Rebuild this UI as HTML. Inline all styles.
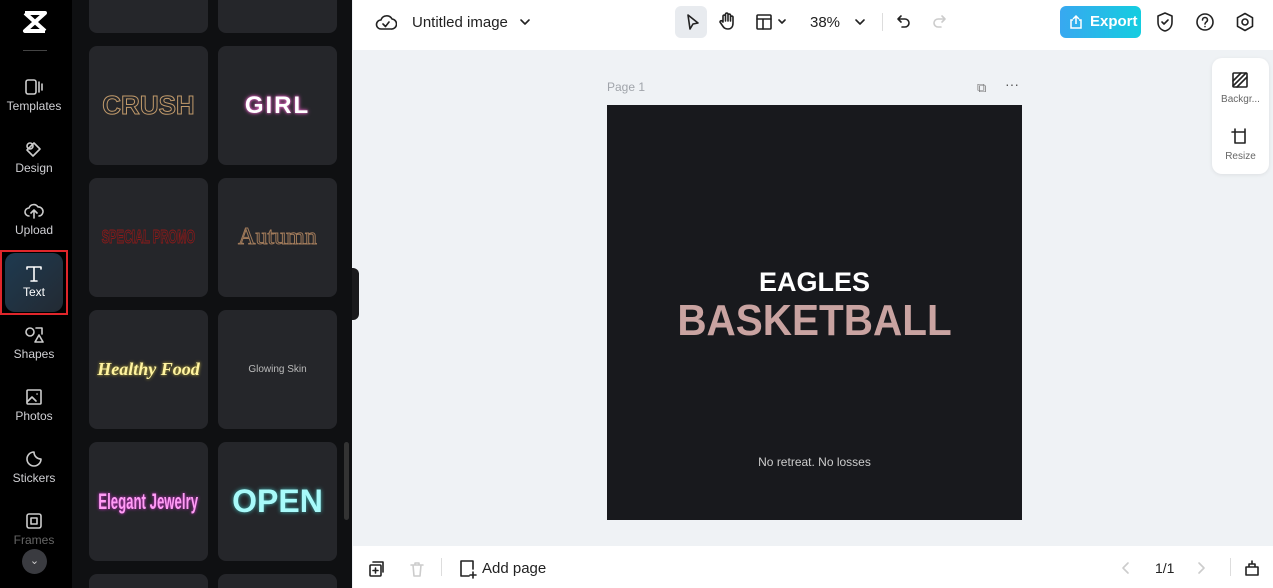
<!DOCTYPE html>
<html><head><meta charset="utf-8"><style>
*{box-sizing:border-box;margin:0;padding:0}
html{width:1273px;height:588px;overflow:hidden}
body{width:1273px;height:588px;overflow:hidden;font-family:"Liberation Sans",sans-serif;background:#eff2f5;position:relative}
.abs{position:absolute}
#side{left:0;top:0;width:72px;height:588px;background:#000}
.nav{position:absolute;left:0;width:68px;text-align:center;color:#d0d0d4;font-size:12px}
.nav svg{display:block;margin:0 auto 3px}
#panel{left:72px;top:0;width:280px;height:588px;background:#0f1012;overflow:hidden}
.card{position:absolute;width:119px;height:119px;background:#25262a;border-radius:8px;display:flex;align-items:center;justify-content:center;overflow:hidden;white-space:nowrap}
.card span{display:inline-block}
#top{left:353px;top:0;width:920px;height:50px;background:#fff}
#bot{left:353px;top:546px;width:920px;height:42px;background:#fff}
.ic{stroke:#222;fill:none;stroke-width:1.6;stroke-linecap:round;stroke-linejoin:round}
</style></head><body>
<div id="side" class="abs">
 <svg class="abs" style="left:22px;top:10px" width="26" height="24" viewBox="0 0 26 24"><path d="M3 3h20L3 21h20M3 3l20 18" stroke="#fff" stroke-width="4" fill="none" stroke-linejoin="round"/></svg>
 <div class="abs" style="left:23px;top:50px;width:24px;height:1px;background:#444"></div>
 <div class="nav" style="top:78px"><svg width="20" height="18" viewBox="0 0 20 18" class="ic" style="stroke:#ccc"><rect x="2" y="2" width="10" height="14" rx="2"/><path d="M15 4v10M18 6v6"/></svg>Templates</div>
 <div class="nav" style="top:140px"><svg width="20" height="18" viewBox="0 0 20 18" class="ic" style="stroke:#ccc"><circle cx="6" cy="6" r="3"/><path d="M10 3l6 6-7 7-6-6z"/></svg>Design</div>
 <div class="nav" style="top:202px"><svg width="20" height="18" viewBox="0 0 20 18" class="ic" style="stroke:#ccc"><path d="M5 14a4 4 0 010-8 5 5 0 019-1 4 4 0 011 9M10 16V9M7 11l3-3 3 3"/></svg>Upload</div>
 <div class="abs" style="left:0;top:250px;width:68px;height:65px;border:2px solid #e0262b"></div>
 <div class="abs" style="left:5px;top:253px;width:58px;height:59px;border-radius:10px;background:linear-gradient(135deg,#1e3a50,#232a33)"></div>
 <div class="nav" style="top:264px;color:#fff"><svg width="20" height="18" viewBox="0 0 20 18" class="ic" style="stroke:#fff"><path d="M3 3h14M10 3v14M3 3v2M17 3v2M7 17h6"/></svg>Text</div>
 <div class="nav" style="top:326px"><svg width="20" height="18" viewBox="0 0 20 18" class="ic" style="stroke:#ccc"><circle cx="6" cy="6" r="4"/><path d="M12 2h6v6M11 16l4-7 4 7z"/></svg>Shapes</div>
 <div class="nav" style="top:388px"><svg width="20" height="18" viewBox="0 0 20 18" class="ic" style="stroke:#ccc"><rect x="3" y="2" width="14" height="14" rx="1"/><path d="M3 14l5-5 4 4M13 6h.1"/></svg>Photos</div>
 <div class="nav" style="top:450px"><svg width="20" height="18" viewBox="0 0 20 18" class="ic" style="stroke:#ccc"><path d="M10 2a7 7 0 107 7c-4 0-7-3-7-7z"/></svg>Stickers</div>
 <div class="nav" style="top:512px;color:#666"><svg width="20" height="18" viewBox="0 0 20 18" class="ic" style="stroke:#ccc"><rect x="3" y="2" width="14" height="14" rx="2"/><rect x="7" y="6" width="6" height="6"/></svg>Frames</div>
 <div class="abs" style="left:22px;top:549px;width:25px;height:25px;border-radius:50%;background:#3a3b40;color:#ccc;font-size:11px;text-align:center;line-height:24px">⌄</div>
</div>
<div id="panel" class="abs">
 <div class="card" style="left:17px;top:-86px"></div><div class="card" style="left:146px;top:-86px"></div>
 <div class="card" style="left:17px;top:46px;font:bold 26px 'Liberation Sans';color:#25262a;-webkit-text-stroke:1px #c19a6b">CRUSH</div>
 <div class="card" style="left:146px;top:46px;font:bold 24px 'Liberation Sans';color:#fff;text-shadow:0 0 4px #e060c0,0 0 2px #e060c0;letter-spacing:2px">GIRL</div>
 <div class="card" style="left:17px;top:178px"><span style="font:bold 18px 'Liberation Sans';color:#25262a;-webkit-text-stroke:1px #8a1a1a;transform:scaleX(.62)">SPECIAL PROMO</span></div>
 <div class="card" style="left:146px;top:178px;font:24px 'Liberation Serif';color:#25262a;-webkit-text-stroke:1px #a07a5a">Autumn</div>
 <div class="card" style="left:17px;top:310px;font:italic bold 18px 'Liberation Serif';color:#fff4a0;text-shadow:0 0 3px #c9b640">Healthy Food</div>
 <div class="card" style="left:146px;top:310px;font:10px 'Liberation Sans';color:#bbb">Glowing Skin</div>
 <div class="card" style="left:17px;top:442px"><span style="font:bold 22px 'Liberation Sans';color:#ff9cf5;text-shadow:0 0 4px #d030d0;transform:scaleX(.6)">Elegant Jewelry</span></div>
 <div class="card" style="left:146px;top:442px;font:bold 32px 'Liberation Sans';color:#a8fafa;text-shadow:0 0 4px #40b0b0">OPEN</div>
 <div class="card" style="left:17px;top:574px"></div><div class="card" style="left:146px;top:574px"></div>
 <div class="abs" style="left:272px;top:442px;width:5px;height:78px;border-radius:3px;background:#333"></div>
</div>
<div class="abs" style="left:352px;top:268px;width:7px;height:52px;border-radius:0 6px 6px 0;background:#1a1a1c"></div>
<div id="top" class="abs">
 <svg class="abs" style="left:22px;top:13px" width="22" height="20" viewBox="0 0 22 20"><path class="ic" d="M6 16a4.5 4.5 0 010-9 6 6 0 0111-1 4.5 4.5 0 01-1 10zM8 11l2.5 2.5L14 9"/></svg>
 <div class="abs" style="left:59px;top:14px;font-size:15px;color:#222">Untitled image</div>
 <svg class="abs" style="left:165px;top:15px" width="14" height="14" viewBox="0 0 14 14"><path class="ic" d="M3 5l4 4 4-4"/></svg>
 <div class="abs" style="left:322px;top:6px;width:32px;height:32px;border-radius:6px;background:#e8ebef"></div>
 <svg class="abs" style="left:329px;top:12px" width="20" height="20" viewBox="0 0 20 20"><path class="ic" d="M6 3l10 8-5 1-3 5z"/></svg>
 <svg class="abs" style="left:364px;top:11px" width="20" height="20" viewBox="0 0 20 20"><path class="ic" d="M6 11V5a1.3 1.3 0 012.5 0v5V3a1.3 1.3 0 012.5 0v7V4a1.3 1.3 0 012.5 0v6V6a1.3 1.3 0 012.5 0v6c0 4-2 6-5 6s-4-1-6-4l-2-3a1.2 1.2 0 012-1z"/></svg>
 <svg class="abs" style="left:402px;top:12px" width="36" height="20" viewBox="0 0 36 20"><rect class="ic" x="2" y="3" width="14" height="14" rx="1"/><path class="ic" d="M2 7h14M8 7v10M24 8l3 3 3-3"/></svg>
 <div class="abs" style="left:457px;top:14px;font-size:15px;color:#222">38%</div>
 <svg class="abs" style="left:500px;top:15px" width="14" height="14" viewBox="0 0 14 14"><path class="ic" d="M3 5l4 4 4-4"/></svg>
 <div class="abs" style="left:529px;top:13px;width:1px;height:18px;background:#ddd"></div>
 <svg class="abs" style="left:541px;top:12px" width="20" height="20" viewBox="0 0 20 20"><path class="ic" d="M7 4L4 7l3 3M4 7h7a4 4 0 010 8H8"/></svg>
 <svg class="abs" style="left:576px;top:12px" width="20" height="20" viewBox="0 0 20 20"><path class="ic" style="stroke:#ccc" d="M13 4l3 3-3 3M16 7H9a4 4 0 000 8h3"/></svg>
 <div class="abs" style="left:707px;top:6px;width:81px;height:32px;border-radius:6px;background:linear-gradient(90deg,#38a8f0,#14cde0);color:#fff;font-size:15px;font-weight:bold;line-height:32px;padding-left:30px">Export</div>
 <svg class="abs" style="left:716px;top:14px" width="14" height="16" viewBox="0 0 14 16"><path d="M4 6H2v8h10V6h-2M7 10V2M4 5l3-3 3 3" stroke="#fff" stroke-width="1.5" fill="none"/></svg>
 <svg class="abs" style="left:802px;top:11px" width="20" height="22" viewBox="0 0 20 22"><path class="ic" d="M10 2l7 3v6c0 5-3 8-7 9-4-1-7-4-7-9V5zM7 11l2 2 4-4"/></svg>
 <svg class="abs" style="left:842px;top:12px" width="20" height="20" viewBox="0 0 20 20"><circle class="ic" cx="10" cy="10" r="8"/><path class="ic" d="M7.5 8a2.5 2.5 0 115 0c0 2-2.5 2-2.5 4M10 14.5v.1"/></svg>
 <svg class="abs" style="left:882px;top:12px" width="20" height="20" viewBox="0 0 20 20"><path class="ic" d="M10 1.5l7.5 4.2v8.6L10 18.5l-7.5-4.2V5.7z"/><circle class="ic" cx="10" cy="10" r="3"/></svg>
</div>
<div class="abs" style="left:607px;top:80px;font-size:12px;color:#a0a4aa">Page 1</div>
<div class="abs" style="left:977px;top:80px;font-size:13px;color:#777">⧉</div>
<div class="abs" style="left:1005px;top:76px;font-size:14px;color:#555">···</div>
<div class="abs" style="left:607px;top:105px;width:415px;height:415px;background:#18191d"></div>
<div class="abs" style="left:607px;top:267px;width:415px;text-align:center;font:bold 27px 'Liberation Sans';color:#fff">EAGLES</div>
<div class="abs" style="left:607px;top:296px;width:415px;text-align:center;font:bold 44px 'Liberation Sans';color:#c9a3a1;transform:scaleX(.92)">BASKETBALL</div>
<div class="abs" style="left:607px;top:455px;width:415px;text-align:center;font-size:12px;color:#ccc">No retreat. No losses</div>
<div class="abs" style="left:1212px;top:58px;width:57px;height:116px;background:#fff;border-radius:10px;box-shadow:0 1px 4px rgba(0,0,0,.08)"></div>
<svg class="abs" style="left:1231px;top:71px" width="18" height="18" viewBox="0 0 18 18"><rect class="ic" x="2" y="2" width="14" height="14" rx="1"/><path class="ic" d="M2 10l8-8M6 16l10-10M2 15L15 2"/></svg>
<div class="abs" style="left:1212px;top:94px;width:57px;text-align:center;font-size:10px;color:#666">Backgr...</div>
<svg class="abs" style="left:1231px;top:128px" width="18" height="18" viewBox="0 0 18 18"><path class="ic" d="M4 4h10v11H4zM4 1v3M14 1v3M1 4h3"/></svg>
<div class="abs" style="left:1212px;top:151px;width:57px;text-align:center;font-size:10px;color:#666">Resize</div>
<div id="bot" class="abs">
 <svg class="abs" style="left:15px;top:14px" width="18" height="18" viewBox="0 0 18 18"><rect class="ic" x="2" y="5" width="11" height="11" rx="1"/><path class="ic" d="M5 2h10v10M7.5 8v5M5 10.5h5"/></svg>
 <svg class="abs" style="left:55px;top:14px" width="18" height="18" viewBox="0 0 18 18"><path class="ic" style="stroke:#ccc" d="M3 5h12M5 5l1 11h6l1-11M7 5V3h4v2"/></svg>
 <div class="abs" style="left:88px;top:12px;width:1px;height:18px;background:#ddd"></div>
 <svg class="abs" style="left:105px;top:13px" width="20" height="20" viewBox="0 0 20 20"><path class="ic" d="M11 17H3V2h12v8M15 13v6M12 16h6"/></svg>
 <div class="abs" style="left:129px;top:14px;font-size:15px;color:#222">Add page</div>
 <svg class="abs" style="left:766px;top:15px" width="14" height="14" viewBox="0 0 14 14"><path class="ic" style="stroke:#ccc" d="M9 2L4 7l5 5"/></svg>
 <div class="abs" style="left:802px;top:14px;font-size:14px;color:#222">1/1</div>
 <svg class="abs" style="left:841px;top:15px" width="14" height="14" viewBox="0 0 14 14"><path class="ic" style="stroke:#ccc" d="M5 2l5 5-5 5"/></svg>
 <div class="abs" style="left:877px;top:12px;width:1px;height:18px;background:#ddd"></div>
 <svg class="abs" style="left:890px;top:13px" width="18" height="18" viewBox="0 0 18 18"><path class="ic" d="M3 8h12v8H3zM6 8V5h6v3M9 5V2"/></svg>
</div>
</body></html>
